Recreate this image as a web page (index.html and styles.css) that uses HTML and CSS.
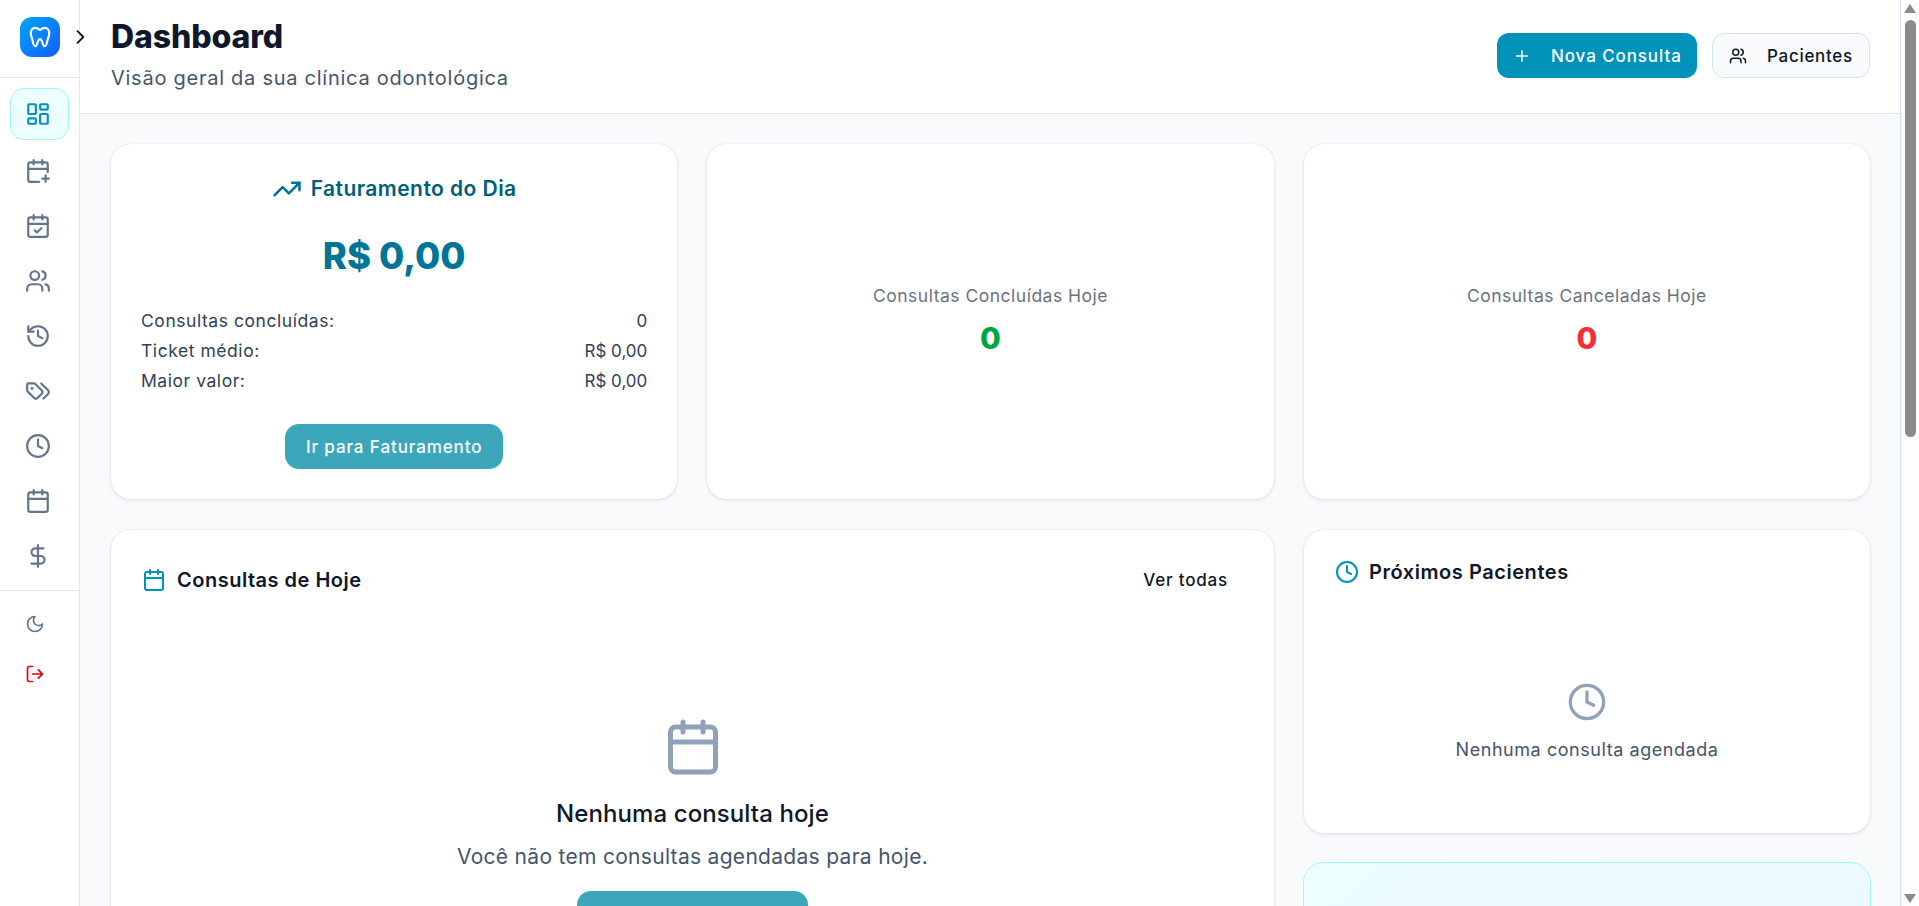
FILE: index.html
```html
<!DOCTYPE html>
<html lang="pt-BR">
<head>
<meta charset="utf-8">
<title>Dashboard</title>
<link rel="stylesheet" href="styles.css">
</head>
<body>
<div class="app">
  <aside class="sidebar">
    <div class="brand">
      <div class="logo">
        <svg width="26" height="26" viewBox="0 0 24 24" fill="none" stroke="#fff" stroke-width="2" stroke-linecap="round" stroke-linejoin="round"><path d="M12 5.500c-1.500-1.100-2.800-2-4.500-2C5 3.500 3.500 6 3.500 8.500c0 2.800 1.200 4.500 1.700 7 .4 2 .8 5 2.600 5 2.200 0 1.500-6.500 4.200-6.500s2 6.500 4.200 6.500c1.800 0 2.200-3 2.600-5 .5-2.500 1.700-4.200 1.700-7C20.500 6 19 3.500 16.500 3.500c-1.700 0-3 .9-4.500 2z"/></svg>
      </div>
      <span class="chev"><svg width="20" height="20" viewBox="0 0 24 24" fill="none" stroke="#0f172a" stroke-width="2.200" stroke-linecap="round" stroke-linejoin="round"><path d="m9 5 7 7-7 7"/></svg></span>
    </div>
    <nav class="nav">
      <a class="nav-item active"><svg class="ic" viewBox="0 0 24 24"><rect x="3" y="3" width="7" height="9" rx="1"/><rect x="14" y="3" width="7" height="5" rx="1"/><rect x="14" y="12" width="7" height="9" rx="1"/><rect x="3" y="16" width="7" height="5" rx="1"/></svg></a>
      <a class="nav-item"><svg class="ic" viewBox="0 0 24 24"><path d="M21 13V6a2 2 0 0 0-2-2H5a2 2 0 0 0-2 2v14a2 2 0 0 0 2 2h8"/><path d="M16 2v4M8 2v4M3 10h18M16 19h6M19 16v6"/></svg></a>
      <a class="nav-item"><svg class="ic" viewBox="0 0 24 24"><path d="M8 2v4M16 2v4"/><rect x="3" y="4" width="18" height="18" rx="2"/><path d="M3 10h18M9 16l2 2 4-4"/></svg></a>
      <a class="nav-item"><svg class="ic" viewBox="0 0 24 24"><path d="M16 21v-2a4 4 0 0 0-4-4H6a4 4 0 0 0-4 4v2"/><circle cx="9" cy="7" r="4"/><path d="M22 21v-2a4 4 0 0 0-3-3.870M16 3.130a4 4 0 0 1 0 7.750"/></svg></a>
      <a class="nav-item"><svg class="ic" viewBox="0 0 24 24"><path d="M3 12a9 9 0 1 0 9-9 9.750 9.750 0 0 0-6.740 2.740L3 8"/><path d="M3 3v5h5M12 7v5l4 2"/></svg></a>
      <a class="nav-item"><svg class="ic" viewBox="0 0 24 24"><path d="m15 5 6.300 6.300a2.400 2.400 0 0 1 0 3.400L17 19"/><path d="M9.586 5.586A2 2 0 0 0 8.172 5H3a1 1 0 0 0-1 1v5.172a2 2 0 0 0 .586 1.414L8.290 18.290a2.426 2.426 0 0 0 3.420 0l3.580-3.580a2.426 2.426 0 0 0 0-3.420z"/><circle cx="6.500" cy="9.500" r=".5" fill="#62748e"/></svg></a>
      <a class="nav-item"><svg class="ic" viewBox="0 0 24 24"><circle cx="12" cy="12" r="10"/><path d="M12 6v6l4 2"/></svg></a>
      <a class="nav-item"><svg class="ic" viewBox="0 0 24 24"><path d="M8 2v4M16 2v4"/><rect x="3" y="4" width="18" height="18" rx="2"/><path d="M3 10h18"/></svg></a>
      <a class="nav-item"><svg class="ic" viewBox="0 0 24 24"><path d="M12 2v20M17 5H9.500a3.500 3.500 0 0 0 0 7h5a3.500 3.500 0 0 1 0 7H6"/></svg></a>
    </nav>
    <div class="side-foot">
      <a class="foot-item"><svg class="ic-sm" viewBox="0 0 24 24"><path d="M12 3a6 6 0 0 0 9 9 9 9 0 1 1-9-9Z"/></svg></a>
      <a class="foot-item"><svg class="ic-sm red" viewBox="0 0 24 24"><path d="M9 21H5a2 2 0 0 1-2-2V5a2 2 0 0 1 2-2h4M16 17l5-5-5-5M21 12H9"/></svg></a>
    </div>
  </aside>

  <main class="main">
    <header class="topbar">
      <div class="titles">
        <h1>Dashboard</h1>
        <p>Visão geral da sua clínica odontológica</p>
      </div>
      <div class="actions">
        <button class="btn primary"><svg class="btn-ic" viewBox="0 0 24 24"><path d="M5 12h14M12 5v14"/></svg><span>Nova Consulta</span></button>
        <button class="btn outline"><svg class="btn-ic" viewBox="0 0 24 24"><path d="M16 21v-2a4 4 0 0 0-4-4H6a4 4 0 0 0-4 4v2"/><circle cx="9" cy="7" r="4"/><path d="M22 21v-2a4 4 0 0 0-3-3.870M16 3.130a4 4 0 0 1 0 7.750"/></svg><span>Pacientes</span></button>
      </div>
    </header>

    <div class="content">
      <section class="grid-top">
        <div class="card revenue">
          <h3 class="rev-title"><svg class="rev-ic" viewBox="0 0 24 24"><path d="M22 7 13.500 15.500 8.500 10.500 2 17"/><path d="M16 7h6v6"/></svg>Faturamento do Dia</h3>
          <div class="rev-amount">R$ 0,00</div>
          <dl class="rev-list">
            <div class="rev-row"><dt>Consultas concluídas:</dt><dd>0</dd></div>
            <div class="rev-row"><dt>Ticket médio:</dt><dd>R$ 0,00</dd></div>
            <div class="rev-row"><dt>Maior valor:</dt><dd>R$ 0,00</dd></div>
          </dl>
          <button class="btn-teal small">Ir para Faturamento</button>
        </div>
        <div class="card stat">
          <div class="stat-label">Consultas Concluídas Hoje</div>
          <div class="stat-value green">0</div>
        </div>
        <div class="card stat">
          <div class="stat-label">Consultas Canceladas Hoje</div>
          <div class="stat-value red-t">0</div>
        </div>
      </section>

      <section class="grid-bottom">
        <div class="card today">
          <div class="card-head">
            <h3 class="card-title"><svg class="title-ic" viewBox="0 0 24 24"><path d="M8 2v4M16 2v4"/><rect x="3" y="4" width="18" height="18" rx="2"/><path d="M3 10h18"/></svg>Consultas de Hoje</h3>
            <button class="link-btn">Ver todas</button>
          </div>
          <div class="empty">
            <svg class="empty-ic" viewBox="0 0 24 24"><path d="M8 2v4M16 2v4"/><rect x="3" y="4" width="18" height="18" rx="2"/><path d="M3 10h18"/></svg>
            <h4>Nenhuma consulta hoje</h4>
            <p>Você não tem consultas agendadas para hoje.</p>
            <button class="btn-teal wide" aria-label="Agendar consulta"></button>
          </div>
        </div>
        <div class="side-col">
          <div class="card next">
            <h3 class="card-title next-title"><svg class="title-ic" viewBox="0 0 24 24"><circle cx="12" cy="12" r="10"/><path d="M12 6v6l4 2"/></svg>Próximos Pacientes</h3>
            <div class="next-empty">
              <svg class="next-ic" viewBox="0 0 24 24"><circle cx="12" cy="12" r="10"/><path d="M12 6v6l4 2"/></svg>
              <p>Nenhuma consulta agendada</p>
            </div>
          </div>
          <div class="card tip"></div>
        </div>
      </section>
    </div>
  </main>

  <div class="scrollbar">
    <span class="arrow up"></span>
    <span class="thumb"></span>
    <span class="track"></span>
    <span class="arrow down"></span>
  </div>
</div>
</body>
</html>
```

FILE: styles.css
```css
* { box-sizing: border-box; }
html, body { margin: 0; height: 100%; overflow: hidden; }
body { font-family: "Inter", "Noto Sans", sans-serif; color: #0f172a; background: #f8fafc; }
h1, h3, h4, p, dl, dd { margin: 0; }
button { font-family: inherit; border: 0; cursor: pointer; }

.app { display: flex; width: 1919px; height: 906px; overflow: hidden; }

.sidebar { width: 80px; flex: none; background: #fff; border-right: 1px solid #e2e8f0; display: flex; flex-direction: column; position: relative; z-index: 1; }
.brand { height: 78px; flex: none; border-bottom: 1px solid #e2e8f0; display: flex; padding: 17px 0 0 20px; }
.logo { width: 40px; height: 40px; flex: none; border-radius: 12px; background: linear-gradient(135deg, #00a6f4, #155dfc); display: flex; align-items: center; justify-content: center; }
.chev { margin: 10px 0 0 10px; width: 20px; height: 20px; flex: none; }
.nav { display: flex; flex-direction: column; gap: 3px; padding: 10px 10px 0; height: 513px; border-bottom: 1px solid #e2e8f0; flex: none; }
.nav-item { height: 52px; flex: none; border-radius: 14px; display: flex; align-items: center; justify-content: center; border: 1px solid transparent; padding-right: 3px; }
.nav-item.active { background: #ecfeff; border-color: #a2f4fd; margin-bottom: 2px; }
.ic { width: 26px; height: 26px; fill: none; stroke: #62748e; stroke-width: 2; stroke-linecap: round; stroke-linejoin: round; }
.nav-item.active .ic { stroke: #0092b8; }
.side-foot { display: flex; flex-direction: column; padding: 13px 19px 0 10px; gap: 10px; }
.foot-item { height: 40px; display: flex; align-items: center; justify-content: center; }
.ic-sm { width: 20px; height: 20px; fill: none; stroke: #62748e; stroke-width: 2; stroke-linecap: round; stroke-linejoin: round; }
.ic-sm.red { stroke: #e7000b; }

.main { flex: 1; min-width: 0; display: flex; flex-direction: column; }
.topbar { height: 114px; flex: none; background: #fff; border-bottom: 1px solid #e2e8f0; display: flex; justify-content: space-between; padding: 18px 30px 0 31px; }
.titles h1 { font-size: 32px; line-height: 38px; font-weight: 800; letter-spacing: -0.1px; color: #0f172a; }
.titles p { font-size: 20px; line-height: 28px; color: #45556c; margin-top: 8px; letter-spacing: 0.74px; }
.actions { display: flex; gap: 15px; padding-top: 15px; height: 60px; }
.btn { height: 45px; border-radius: 12px; display: flex; align-items: center; font-size: 17px; font-weight: 500; padding: 0 16px; gap: 20px; }
.btn-ic { width: 18px; height: 18px; flex: none; fill: none; stroke: currentColor; stroke-width: 2; stroke-linecap: round; stroke-linejoin: round; }
.primary { width: 200px; background: #0092b8; color: #fff; letter-spacing: 0.9px; white-space: nowrap; }
.outline { width: 158px; background: #f8fafc; color: #0f172a; border: 1px solid #d5e3f3; letter-spacing: 0.7px; }

.content { flex: 1; padding: 30px 30px 0 31px; display: flex; flex-direction: column; gap: 31px; overflow: hidden; }
.card { background: #fff; border-radius: 20px; box-shadow: 0 0 2px rgba(15,23,42,.12), 0 2px 4px rgba(15,23,42,.07); }
.grid-top { display: grid; grid-template-columns: 1fr 1fr 1fr; gap: 30px; flex: none; height: 355px; }
.revenue { padding: 31px 30px 0; display: flex; flex-direction: column; align-items: center; }
.rev-title { display: flex; align-items: center; gap: 9px; font-size: 21px; line-height: 28px; font-weight: 600; letter-spacing: 0.45px; color: #005f78; }
.rev-ic { width: 30px; height: 30px; flex: none; margin: -1px 0; fill: none; stroke: #007595; stroke-width: 2; stroke-linecap: round; stroke-linejoin: round; }
.rev-amount { font-size: 36.500px; line-height: 48px; font-weight: 800; color: #007595; margin-top: 29px; }
.rev-list { width: 100%; margin-top: 29px; display: flex; flex-direction: column; gap: 6px; }
.rev-row { display: flex; justify-content: space-between; font-size: 17.500px; line-height: 24px; letter-spacing: 0.55px; color: #314158; }
.rev-row dd { font-size: 17px; letter-spacing: 0; }
.btn-teal { background: #3ca7ba; color: #fff; font-weight: 500; border-radius: 14px; font-size: 17px; letter-spacing: 0.9px; display: block; }
.btn-teal.small { width: 218px; height: 45px; margin-top: 31px; }
.stat { display: flex; flex-direction: column; align-items: center; padding-top: 140px; }
.stat-label { font-size: 17.500px; line-height: 24px; letter-spacing: 0.5px; color: #6a7282; }
.stat-value { font-size: 30px; line-height: 36px; font-weight: 800; margin-top: 12px; }
.green { color: #00a63e; }
.red-t { color: #fb2c36; }

.grid-bottom { display: grid; grid-template-columns: 1163px 566px; gap: 30px; flex: none; }
.today { height: 600px; padding: 29px 31px; }
.card-head { display: flex; justify-content: space-between; align-items: center; height: 42px; }
.card-title { display: flex; align-items: center; gap: 11px; font-size: 20px; line-height: 28px; font-weight: 600; letter-spacing: 0.5px; color: #0f172a; }
.title-ic { width: 24px; height: 24px; flex: none; fill: none; stroke: #0092b8; stroke-width: 2; stroke-linecap: round; stroke-linejoin: round; }
.link-btn { background: none; font-size: 17px; letter-spacing: 0.8px; font-weight: 500; color: #0f172a; padding: 0 15px; height: 40px; }
.empty { display: flex; flex-direction: column; align-items: center; margin-top: 116px; }
.empty-ic { width: 60px; height: 60px; flex: none; fill: none; stroke: #90a1b9; stroke-width: 2; stroke-linecap: round; stroke-linejoin: round; }
.empty h4 { font-size: 24px; line-height: 32px; letter-spacing: 0.1px; font-weight: 500; color: #0f172a; margin-top: 21px; }
.empty p { font-size: 21px; line-height: 28px; letter-spacing: 0.3px; color: #45556c; margin-top: 13px; }
.btn-teal.wide { width: 231px; height: 45px; margin-top: 20px; }

.side-col { display: flex; flex-direction: column; gap: 30px; }
.next { height: 303px; padding: 27px 31px; }
.next-title { height: 30px; gap: 10px; letter-spacing: 0.55px; }
.next-empty { display: flex; flex-direction: column; align-items: center; margin-top: 95px; }
.next-ic { width: 40px; height: 40px; flex: none; fill: none; stroke: #90a1b9; stroke-width: 2; stroke-linecap: round; stroke-linejoin: round; }
.next-empty p { font-size: 18px; line-height: 24px; letter-spacing: 0.55px; color: #45556c; margin-top: 16px; }
.tip { height: 300px; background: linear-gradient(135deg, #ecfeff, #eff6ff); box-shadow: 0 0 0 1px #a2f4fd; }

.scrollbar { width: 19px; flex: none; background: #fdfdfe; border-left: 1px solid #cfe2f8; display: flex; flex-direction: column; align-items: center; }
.arrow { width: 0; height: 0; border-left: 6.500px solid transparent; border-right: 6.500px solid transparent; flex: none; }
.arrow.up { border-bottom: 9px solid #8b8b8b; margin-top: 4px; }
.arrow.down { border-top: 9px solid #8b8b8b; margin-bottom: 3px; }
.thumb { width: 11px; height: 417px; background: #8b8b8b; border-radius: 6px; margin-top: 7px; flex: none; }
.track { flex: 1; }
```
